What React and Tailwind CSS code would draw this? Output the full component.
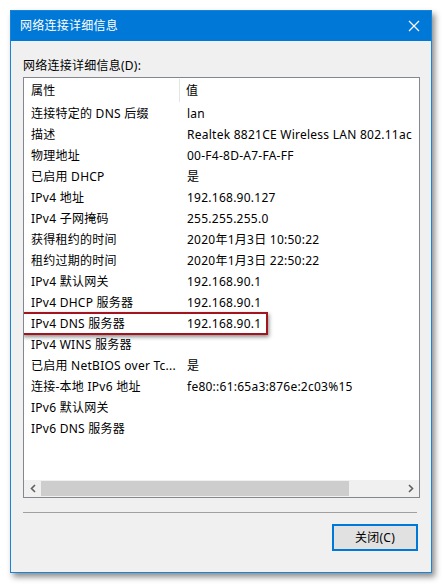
import React from 'react';

const rows = [
	['连接特定的 DNS 后缀', 'lan'],
	['描述', 'Realtek 8821CE Wireless LAN 802.11ac'],
	['物理地址', '00-F4-8D-A7-FA-FF'],
	['已启用 DHCP', '是'],
	['IPv4 地址', '192.168.90.127'],
	['IPv4 子网掩码', '255.255.255.0'],
	['获得租约的时间', '2020年1月3日 10:50:22'],
	['租约过期的时间', '2020年1月3日 22:50:22'],
	['IPv4 默认网关', '192.168.90.1'],
	['IPv4 DHCP 服务器', '192.168.90.1'],
	['IPv4 DNS 服务器', '192.168.90.1'],
	['IPv4 WINS 服务器', ''],
	['已启用 NetBIOS over Tc...', '是'],
	['连接-本地 IPv6 地址', 'fe80::61:65a3:876e:2c03%15'],
	['IPv6 默认网关', ''],
	['IPv6 DNS 服务器', ''],
];

function Row({ name, value, marked }) {
	return (
		<div className="relative flex h-[21px] items-center">
			<div className="w-[156px] shrink-0 overflow-hidden whitespace-nowrap pl-[7px]">{name}</div>
			<div className="whitespace-nowrap pl-[7px]">{value}</div>
			{marked && (
				<div className="absolute left-[-2px] top-[-1px] h-[23px] w-[246px] border-2 border-[#a3151e] shadow-[1px_2px_4px_rgba(0,0,0,0.45)]" />
			)}
		</div>
	);
}

export default function App() {
	return (
		<div
			className="h-[584px] w-[443px] bg-white pl-[10px] pt-[10px] text-[12px] tracking-[0.25px] text-black"
			style={{ fontFamily: '"Noto Sans", "Noto Sans CJK SC", sans-serif' }}
		>
			<div className="flex h-[563px] w-[422px] flex-col border border-[#1883d7] bg-[#f0f0f0] shadow-[3px_4px_6px_rgba(0,0,0,0.45)]">
				{/* title bar */}
				<div className="flex h-[30px] shrink-0 items-center justify-between bg-[#0078d7] pl-[9px] pr-[9px] text-white">
					<span>网络连接详细信息</span>
					<svg width="12" height="12" viewBox="0 0 12 12" className="mr-[2px]">
						<path d="M1 1 L11 11 M11 1 L1 11" stroke="white" strokeWidth="1.2" />
					</svg>
				</div>

				<div className="flex flex-1 flex-col px-[12px]">
					<div className="mt-[15px] h-[20px] leading-[20px]">网络连接详细信息(D):</div>

					{/* list box */}
					<div className="mt-[1px] flex h-[421px] w-[397px] flex-col border border-[#828790] bg-white">
						<div className="flex h-[25px] items-center">
							<div className="flex h-[23px] w-[156px] items-center border-r border-[#e5e5e5] pl-[7px]">属性</div>
							<div className="pl-[6px]">值</div>
						</div>
						<div className="flex-1 overflow-hidden">
							{rows.map(([n, v], i) => (
								<Row key={i} name={n} value={v} marked={i === 10} />
							))}
						</div>
						{/* horizontal scrollbar */}
						<div className="flex h-[17px] shrink-0 items-center bg-[#f0f0f0]">
							<div className="flex w-[17px] justify-center">
								<svg width="8" height="9" viewBox="0 0 8 9">
									<path d="M6 1 L2.5 4.5 L6 8" stroke="#606060" strokeWidth="1.6" fill="none" />
								</svg>
							</div>
							<div className="h-[15px] w-[308px] bg-[#cdcdcd]" />
							<div className="flex-1" />
							<div className="flex w-[17px] justify-center">
								<svg width="8" height="9" viewBox="0 0 8 9">
									<path d="M2 1 L5.5 4.5 L2 8" stroke="#606060" strokeWidth="1.6" fill="none" />
								</svg>
							</div>
						</div>
					</div>

					<div className="mt-[14px] h-px w-[394px] bg-[#a0a0a0]" />

					<div className="mt-[11px] flex justify-end pr-[1px]">
						<button className="h-[27px] w-[86px] border-2 border-[#0078d7] bg-[#e1e1e1] text-[12px]">
							关闭(C)
						</button>
					</div>
				</div>
			</div>
		</div>
	);
}
